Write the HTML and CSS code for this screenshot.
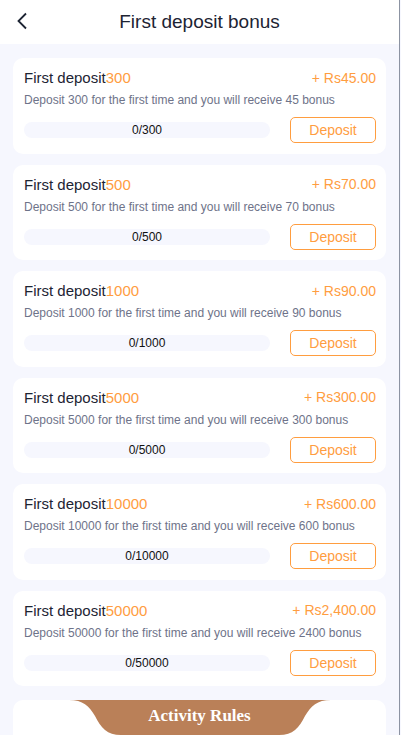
FILE: index.html
```html
<!DOCTYPE html>
<html lang="en">
<head>
    <meta charset="UTF-8">
    <meta name="viewport" content="width=device-width, initial-scale=1.0">
    <title>First deposit bonus</title>
    <link rel="stylesheet" href="styles.css">
</head>
<body>
    <div class="app">
        <header class="topbar">
            <a class="back" href="#">
                <svg width="12" height="18" viewBox="0 0 12 18"><path d="M10 1.5 L2.5 9 L10 16.5" fill="none" stroke="#1d2433" stroke-width="1.8"/></svg>
            </a>
            <h1>First deposit bonus</h1>
        </header>

        <main class="list">
            <div class="card">
                <div class="row">
                    <div class="title">First deposit<span class="hl">300</span></div>
                    <div class="bonus">+ Rs45.00</div>
                </div>
                <p class="desc">Deposit 300 for the first time and you will receive 45 bonus</p>
                <div class="row">
                    <div class="progress">0/300</div>
                    <button class="btn">Deposit</button>
                </div>
            </div>
            <div class="card">
                <div class="row">
                    <div class="title">First deposit<span class="hl">500</span></div>
                    <div class="bonus">+ Rs70.00</div>
                </div>
                <p class="desc">Deposit 500 for the first time and you will receive 70 bonus</p>
                <div class="row">
                    <div class="progress">0/500</div>
                    <button class="btn">Deposit</button>
                </div>
            </div>
            <div class="card">
                <div class="row">
                    <div class="title">First deposit<span class="hl">1000</span></div>
                    <div class="bonus">+ Rs90.00</div>
                </div>
                <p class="desc">Deposit 1000 for the first time and you will receive 90 bonus</p>
                <div class="row">
                    <div class="progress">0/1000</div>
                    <button class="btn">Deposit</button>
                </div>
            </div>
            <div class="card">
                <div class="row">
                    <div class="title">First deposit<span class="hl">5000</span></div>
                    <div class="bonus">+ Rs300.00</div>
                </div>
                <p class="desc">Deposit 5000 for the first time and you will receive 300 bonus</p>
                <div class="row">
                    <div class="progress">0/5000</div>
                    <button class="btn">Deposit</button>
                </div>
            </div>
            <div class="card">
                <div class="row">
                    <div class="title">First deposit<span class="hl">10000</span></div>
                    <div class="bonus">+ Rs600.00</div>
                </div>
                <p class="desc">Deposit 10000 for the first time and you will receive 600 bonus</p>
                <div class="row">
                    <div class="progress">0/10000</div>
                    <button class="btn">Deposit</button>
                </div>
            </div>
            <div class="card">
                <div class="row">
                    <div class="title">First deposit<span class="hl">50000</span></div>
                    <div class="bonus">+ Rs2,400.00</div>
                </div>
                <p class="desc">Deposit 50000 for the first time and you will receive 2400 bonus</p>
                <div class="row">
                    <div class="progress">0/50000</div>
                    <button class="btn">Deposit</button>
                </div>
            </div>

            <div class="rules">
                <div class="rules-tab">
                    <svg class="tab-bg" width="262" height="36" viewBox="0 0 262 36" preserveAspectRatio="none"><path d="M0 0 H262 C248 0 242 6 236 16 C230 28 224 35 210 35 H52 C38 35 32 28 26 16 C20 6 14 0 0 0 Z" fill="#ba8058"/></svg>
                    <span>Activity Rules</span>
                </div>
            </div>
        </main>
    </div>
</body>
</html>
```

FILE: styles.css
```css
* {
    margin: 0;
    padding: 0;
    box-sizing: border-box;
}

body {
    font-family: "Liberation Sans", Arial, sans-serif;
    background-color: #f6f7fe;
    color: #1d2433;
}

.app {
    width: 400px;
    min-height: 735px;
    border-right: 1px solid #8c93a2;
    background-color: #f6f7fe;
}

.topbar {
    height: 44px;
    background-color: #fff;
    display: flex;
    align-items: center;
    justify-content: center;
    position: relative;
}

.back {
    position: absolute;
    left: 16px;
    top: 12px;
    display: flex;
}

.topbar h1 {
    font-size: 19px;
    font-weight: normal;
    color: #1d2433;
}

.list {
    padding: 14px 13px 0 13px;
    display: flex;
    flex-direction: column;
    gap: 11px;
}

.card {
    background-color: #fff;
    border-radius: 10px;
    padding: 10px 10px 10px 11px;
    height: 95.5px;
}

.row {
    display: flex;
    justify-content: space-between;
    align-items: center;
}

.title {
    font-size: 15px;
    line-height: 19px;
    color: #1d2433;
}

.hl,
.bonus {
    color: #ff9d3f;
}

.bonus {
    font-size: 14px;
}

.desc {
    font-size: 12px;
    color: #6e7389;
    margin: 6px 0 10px;
    line-height: 14px;
}

.progress {
    width: 246px;
    height: 16px;
    border-radius: 8px;
    background-color: #f6f7fe;
    font-size: 12px;
    line-height: 16px;
    text-align: center;
    color: #111;
}

.btn {
    width: 86px;
    height: 26px;
    border: 1px solid #ff9d3f;
    border-radius: 5px;
    background: #fff;
    color: #ff9d3f;
    font-family: inherit;
    font-size: 14px;
}

.rules {
    margin-top: 3px;
    background-color: #fff;
    border-radius: 10px 10px 0 0;
    height: 60px;
    display: flex;
    justify-content: center;
}

.rules-tab {
    width: 262px;
    height: 36px;
    position: relative;
    display: flex;
    justify-content: center;
    align-items: center;
}

.tab-bg {
    position: absolute;
    left: 0;
    top: 0;
}

.rules-tab span {
    position: relative;
    font-family: "Liberation Serif", "Times New Roman", serif;
    font-weight: bold;
    font-size: 17px;
    color: #fff;
    margin-bottom: 4px;
}
```
